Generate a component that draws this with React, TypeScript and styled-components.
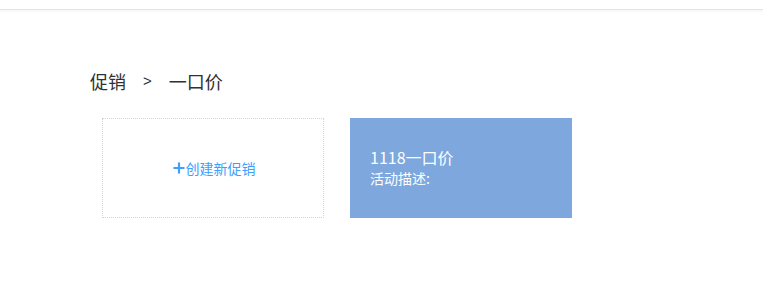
import React from "react";
import styled, { createGlobalStyle } from "styled-components";

const Global = createGlobalStyle`
  html, body { margin: 0; padding: 0; background: #fff; }
  body { font-family: "Noto Sans CJK SC", "Microsoft YaHei", "Noto Sans", sans-serif; }
`;

const TopBar = styled.header`
  height: 9px;
  background: #fff;
  border-bottom: 1px solid #e6e6e6;
  box-shadow: 0 1px 3px rgba(0, 0, 0, 0.06);
`;

const Main = styled.main`
  padding: 59px 0 0 90px;
`;

const Breadcrumb = styled.nav`
  display: flex;
  align-items: center;
  font-size: 18px;
  line-height: 24px;
  color: #303133;
`;

const Sep = styled.span`
  font-family: "Liberation Sans", Arial, sans-serif;
  font-size: 15px;
  margin: 0 17px 0 17px;
  color: #1f2d3d;
`;

const CardList = styled.div`
  display: flex;
  gap: 26px;
  margin: 25px 0 0 12px;
`;

const Card = styled.div<{ $add?: boolean }>`
  box-sizing: border-box;
  width: 222px;
  height: 100px;
  ${(p) =>
    p.$add
      ? `
    border: 1px dotted #d4d4d4;
    display: flex;
    align-items: center;
    justify-content: center;
    color: #409eff;
    font-size: 14px;
    cursor: pointer;
  `
      : `
    background: #7ea7dd;
    color: #fff;
    padding: 28px 20px 0;
  `}
`;

const Plus = styled.svg`
  width: 12px;
  height: 12px;
  margin: 0 1px 0 2px;
`;

const AddLabel = styled.span`
  display: flex;
  align-items: center;
  line-height: 20px;
`;

const Title = styled.div`
  font-size: 16px;
  line-height: 22px;
`;

const Desc = styled.div`
  font-size: 14px;
  line-height: 20px;
`;

export default function App() {
  return (
    <>
      <Global />
      <TopBar />
      <Main>
        <Breadcrumb>
          <span>促销</span>
          <Sep>&gt;</Sep>
          <span>一口价</span>
        </Breadcrumb>
        <CardList>
          <Card $add>
            <AddLabel>
              <Plus viewBox="0 0 12 12">
                <path d="M6 0.5v11M0.5 6h11" stroke="#409eff" strokeWidth="2.2" fill="none" />
              </Plus>
              创建新促销
            </AddLabel>
          </Card>
          <Card>
            <Title>1118一口价</Title>
            <Desc>活动描述:</Desc>
          </Card>
        </CardList>
      </Main>
    </>
  );
}
